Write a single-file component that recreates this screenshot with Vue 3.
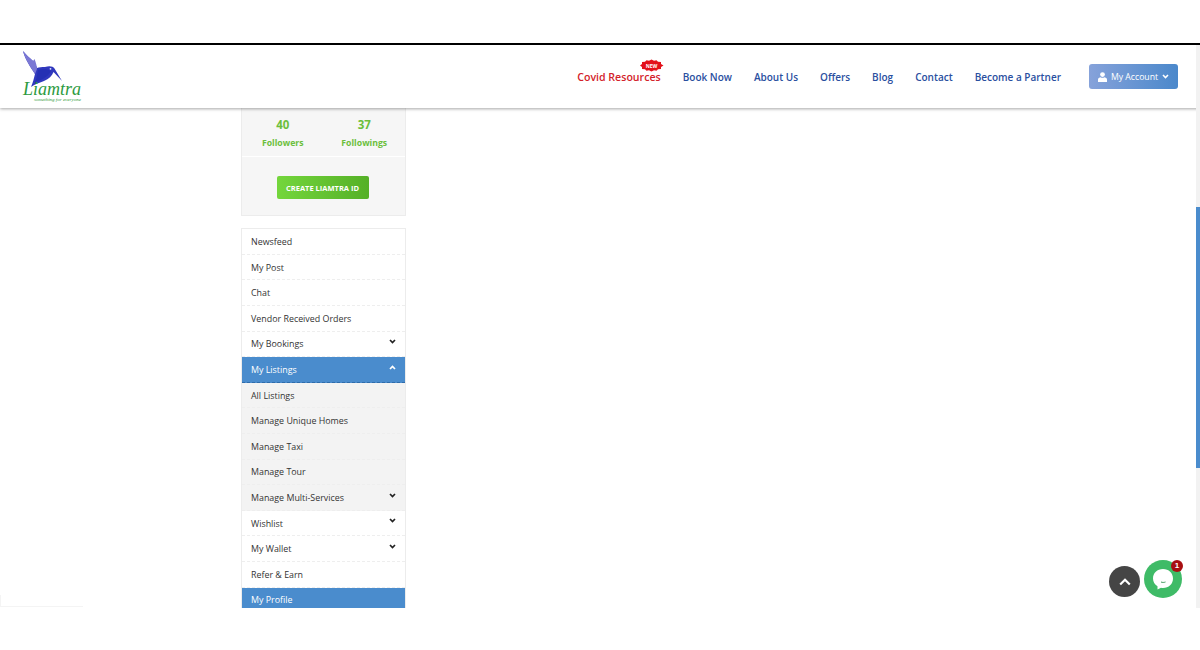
<script setup>
const stats = [
  { value: 40, label: 'Followers' },
  { value: 37, label: 'Followings' },
]
const links = ['Book Now', 'About Us', 'Offers', 'Blog', 'Contact', 'Become a Partner']
const menu = [
  { label: 'Newsfeed' },
  { label: 'My Post' },
  { label: 'Chat' },
  { label: 'Vendor Received Orders' },
  { label: 'My Bookings', arrow: 'down' },
  { label: 'My Listings', arrow: 'up', active: true, dashed: true },
  { label: 'All Listings', sub: true },
  { label: 'Manage Unique Homes', sub: true },
  { label: 'Manage Taxi', sub: true },
  { label: 'Manage Tour', sub: true },
  { label: 'Manage Multi-Services', sub: true, arrow: 'down' },
  { label: 'Wishlist', arrow: 'down' },
  { label: 'My Wallet', arrow: 'down' },
  { label: 'Refer & Earn' },
  { label: 'My Profile', active: true },
]
</script>

<template>
  <div class="page">
    <div class="frame">
      <header class="header">
        <div class="logo">
          <svg class="bird" width="42" height="38" viewBox="0 0 42 38">
            <path d="M1 1 C4 5 8 8 11 11 C12.500 13 14 15 15 18 C17 17 20 17 23 17 C27 15.500 31 16 32.500 18.500 L40 31 L31.500 22 C30 26 27 29 22 31 C18 32.500 13 34 9 37 C11 32 12 28 13 24 C9 18 3 9 1 1 Z" fill="#3038bd"/>
            <path d="M1 1 C4 5 8 8 11 11 L12.500 9 C14 13 15 16 15 19 L13 24 C9 18 3 9 1 1 Z" fill="#7b78d4"/>
            <path d="M16 20 C20 19 25 19 29 21 C26 27 20 30 13 32 C15 28 15 24 16 20 Z" fill="#2530b4"/>
            <circle cx="28.500" cy="18.800" r="0.900" fill="#dfe6ff"/>
          </svg>
          <span class="logo-name">Liamtra</span>
          <span class="logo-tag">something for everyone</span>
        </div>
        <nav class="nav">
          <a class="nav-link covid">
            <svg class="new-badge" width="25" height="13" viewBox="0 0 25 13">
              <path d="M1 6.500 L3 5 L3 3 L6 2.800 L7.500 1.200 L10 1.800 L12.500 0.500 L15 1.800 L17.500 1.200 L19 2.800 L22 3 L22 5 L24.500 6.500 L22 8 L22 10 L19 10.200 L17.500 11.800 L15 11.200 L12.500 12.500 L10 11.200 L7.500 11.800 L6 10.200 L3 10 L3 8 Z" fill="#e3101a"/>
              <text x="12.500" y="8.500" text-anchor="middle" class="new-text">NEW</text>
            </svg>
            Covid Resources
          </a>
          <a v-for="l in links" :key="l" class="nav-link">{{ l }}</a>
          <button class="account">
            <svg width="9" height="10" viewBox="0 0 9 10"><circle cx="4.500" cy="2.600" r="2.400" fill="#fff"/><path d="M0 10 V7.500 C0 6 1.500 5.400 2.500 5.200 C3.700 5.900 5.300 5.900 6.500 5.200 C7.500 5.400 9 6 9 7.500 V10 Z" fill="#fff"/></svg>
            <span>My Account</span>
            <svg width="7" height="5" viewBox="0 0 7 5"><path d="M1 1 L3.500 3.500 L6 1" fill="none" stroke="#fff" stroke-width="1.600"/></svg>
          </button>
        </nav>
      </header>

      <main class="main">
        <aside class="sidebar">
          <section class="profile">
            <div class="stats">
              <div v-for="s in stats" :key="s.label" class="stat">
                <strong>{{ s.value }}</strong>
                <span>{{ s.label }}</span>
              </div>
            </div>
            <div class="cta">
              <button class="create">CREATE LIAMTRA ID</button>
            </div>
          </section>

          <ul class="menu">
            <li
              v-for="m in menu"
              :key="m.label"
              class="item"
              :class="{ active: m.active, sub: m.sub, dashed: m.dashed }"
            >
              <span>{{ m.label }}</span>
              <svg v-if="m.arrow" class="arrow" width="7" height="5" viewBox="0 0 7 5">
                <path :d="m.arrow === 'down' ? 'M1 1 L3.500 3.500 L6 1' : 'M1 4 L3.500 1.500 L6 4'" fill="none" stroke="currentColor" stroke-width="1.700"/>
              </svg>
            </li>
          </ul>
        </aside>
      </main>

      <div class="scrollbar"><div class="thumb"></div></div>

      <button class="to-top" aria-label="Back to top">
        <svg width="12" height="8" viewBox="0 0 12 8"><path d="M1.200 6.500 L6 1.800 L10.800 6.500" fill="none" stroke="#fff" stroke-width="2.200"/></svg>
      </button>
      <button class="chat" aria-label="Chat">
        <svg width="22" height="22" viewBox="0 0 22 22">
          <path d="M11 1 C16.800 1 21 5 21 10.500 C21 16 16.800 20 11 20 C10.300 20 9.700 20 9 19.800 L5.500 21.500 L5.500 18.300 C2.700 16.600 1 13.800 1 10.500 C1 5 5.200 1 11 1 Z" fill="#fff"/>
          <path d="M9 14 C10.500 14.600 12 14.600 13.500 14" fill="none" stroke="#3f9a5c" stroke-width="1"/>
        </svg>
        <span class="count">1</span>
      </button>

      <div class="recaptcha"></div>
    </div>
  </div>
</template>

<style>
html, body { margin: 0; background: #fff; overflow: hidden; }
</style>

<style scoped>
.page {
  width: 1200px;
  height: 650px;
  padding-top: 43px;
  box-sizing: border-box;
  background: #fff;
  font-family: "Open Sans", "Liberation Sans", sans-serif;
}
.frame {
  position: relative;
  box-sizing: border-box;
  height: 565px;
  border-top: 2px solid #000;
  overflow: hidden;
  background: #fff;
}
.header {
  position: relative;
  z-index: 2;
  height: 63px;
  display: flex;
  justify-content: space-between;
  align-items: center;
  background: #fff;
  box-shadow: 0 1px 3px rgba(0, 0, 0, 0.35);
  padding: 0 22px 0 22px;
}
.logo {
  position: relative;
  width: 64px;
  height: 58px;
  margin-top: 1px;
}
.bird { position: absolute; left: 0; top: 2px; }
.logo-name {
  position: absolute;
  left: 1px;
  top: 31px;
  font-family: "Liberation Serif", serif;
  font-style: italic;
  font-size: 18px;
  line-height: 20px;
  color: #2c9a3e;
}
.logo-tag {
  position: absolute;
  left: 12px;
  top: 49px;
  font-family: "Liberation Serif", serif;
  font-style: italic;
  font-size: 5px;
  line-height: 6px;
  white-space: nowrap;
  color: #2f9c3c;
}
.nav {
  display: flex;
  align-items: center;
  gap: 22px;
  height: 100%;
}
.nav-link {
  position: relative;
  font-size: 10px;
  font-weight: 600;
  color: #2a4f9f;
  white-space: nowrap;
}
.nav-link.covid {
  font-size: 10.600px;
  color: #d3222a;
}
.new-badge {
  position: absolute;
  top: -11px;
  right: -3px;
}
.new-text {
  font-size: 5px;
  font-weight: 700;
  fill: #fff;
  font-family: "Open Sans", sans-serif;
}
.account {
  display: flex;
  align-items: center;
  justify-content: center;
  gap: 4px;
  width: 89px;
  height: 25px;
  margin-left: 6px;
  padding: 0;
  border: 0;
  border-radius: 3px;
  background: linear-gradient(to right, #86a2da, #4a88cb);
  color: #fff;
  font-family: inherit;
  font-size: 8.700px;
  font-weight: 400;
}
.main {
  padding-left: 241px;
}
.sidebar {
  width: 165px;
}
.profile {
  box-sizing: border-box;
  height: 108px;
  background: #f6f6f6;
  border: 1px solid #ececec;
  border-top: 0;
}
.stats {
  display: flex;
  height: 49px;
  padding-top: 9px;
  box-sizing: border-box;
  border-bottom: 1px solid #fff;
}
.stat {
  flex: 1;
  display: flex;
  flex-direction: column;
  align-items: center;
  color: #6cbf3c;
}
.stat strong {
  font-size: 11.500px;
  font-weight: 700;
  line-height: 16px;
}
.stat span {
  margin-top: 3px;
  font-size: 8.700px;
  font-weight: 700;
  line-height: 14px;
}
.cta {
  display: flex;
  justify-content: center;
  padding: 19px 2px 0 0;
}
.create {
  width: 92px;
  height: 23px;
  padding: 0;
  border: 0;
  border-radius: 2px;
  background: linear-gradient(to right, #74d63c, #55b027);
  color: #fff;
  font-family: inherit;
  font-size: 7.500px;
  font-weight: 700;
}
.menu {
  list-style: none;
  margin: 12.300px 0 0;
  padding: 0;
  border: 1px solid #ececec;
  border-bottom: 0;
}
.item {
  box-sizing: border-box;
  height: 25.600px;
  display: flex;
  align-items: center;
  justify-content: space-between;
  padding: 0 9px;
  font-size: 8.900px;
  color: #333;
  background: #fff;
  border-bottom: 1px dashed #eeeeee;
}
.item.sub { background: #f3f3f3; }
.item.active {
  background: #4a8ccd;
  color: #fff;
  font-weight: 500;
  border-bottom-color: #4a8ccd;
}
.item.dashed { border-bottom-color: #2f6cab; }
.arrow { margin: -5px 0 0; color: #222; }
.active .arrow { color: #fff; }
.scrollbar {
  position: absolute;
  top: 0;
  right: 0;
  width: 4px;
  height: 563px;
  background: #f2f2f2;
  z-index: 3;
}
.thumb {
  margin-top: 162px;
  height: 261px;
  background: #4a8ccd;
}
.to-top {
  position: absolute;
  left: 1109px;
  top: 521px;
  width: 31px;
  height: 31px;
  padding: 0;
  border: 0;
  border-radius: 50%;
  background: #454545;
  display: flex;
  align-items: center;
  justify-content: center;
}
.chat {
  position: absolute;
  left: 1144px;
  top: 515px;
  width: 38px;
  height: 38px;
  padding: 0;
  border: 0;
  border-radius: 50%;
  background: #3fbb67;
  display: flex;
  align-items: center;
  justify-content: center;
}
.count {
  position: absolute;
  right: -1px;
  top: 0;
  width: 12px;
  height: 12px;
  border-radius: 50%;
  background: #a80f12;
  color: #fff;
  font-size: 8px;
  font-weight: 700;
  line-height: 12px;
  text-align: center;
}
.recaptcha {
  position: absolute;
  left: 0;
  top: 550px;
  width: 83px;
  height: 12px;
  border-left: 1px solid #f4f4f4;
  border-bottom: 1px solid #f4f4f4;
  box-sizing: border-box;
}
</style>
